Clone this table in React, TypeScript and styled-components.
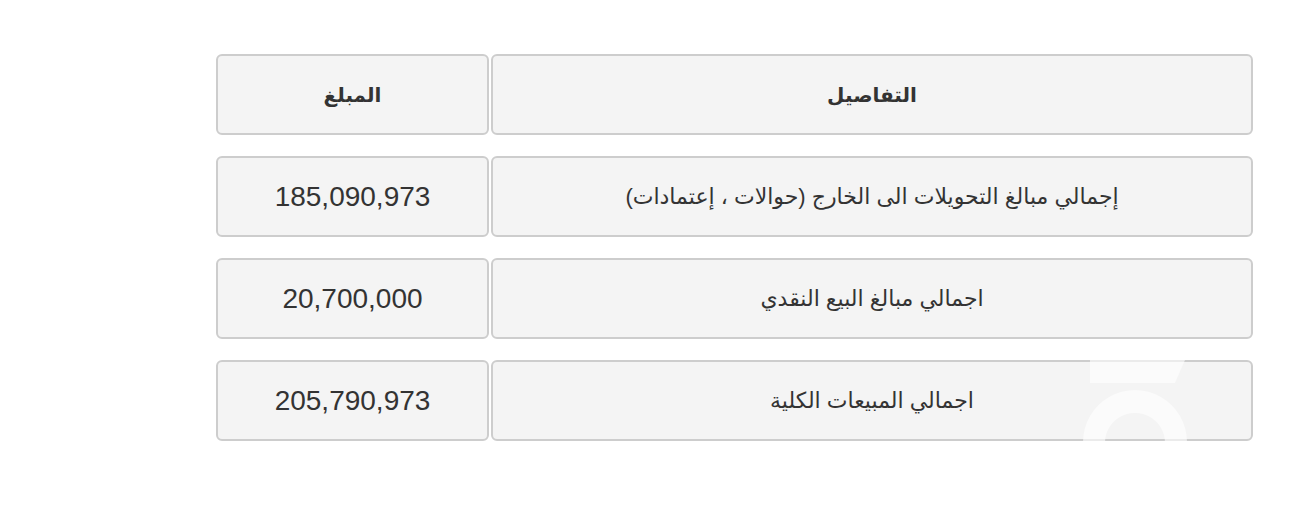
import React from "react";
import styled, { createGlobalStyle } from "styled-components";

const GlobalStyle = createGlobalStyle`
	html, body {
		margin: 0;
		padding: 0;
		background: #fff;
		font-family: "Liberation Sans", Arial, "DejaVu Sans", sans-serif;
		color: #333;
	}
`;

const Page = styled.div`
	position: relative;
	width: 1308px;
	height: 510px;
	overflow: hidden;
	direction: rtl;
	box-sizing: border-box;
	padding: 33px 53px 0 0;
`;

const Table = styled.table`
	border-collapse: separate;
	border-spacing: 2px 21px;
	table-layout: fixed;
	width: 1041px;
`;

const Cell = styled.td<{ $head?: boolean; $wide?: boolean }>`
	height: 81px;
	box-sizing: border-box;
	border: 2px solid #cdcdcd;
	border-radius: 6px;
	background: #f4f4f4;
	text-align: center;
	vertical-align: middle;
	padding: 0 10px;
	width: ${(p) => (p.$wide ? "762px" : "273px")};
	font-size: ${(p) => (p.$head ? "20px" : "22px")};
	font-weight: ${(p) => (p.$head ? "bold" : "normal")};
	color: #333;
`;

const Amount = styled.span`
	font-size: 28px;
	direction: ltr;
	unicode-bidi: isolate;
`;

const Watermark = styled.svg`
	position: absolute;
	left: 1080px;
	top: 355px;
	pointer-events: none;
`;

const rows = [
	{ details: "إجمالي مبالغ التحويلات الى الخارج (حوالات ، إعتمادات)", amount: "185,090,973" },
	{ details: "اجمالي مبالغ البيع النقدي", amount: "20,700,000" },
	{ details: "اجمالي المبيعات الكلية", amount: "205,790,973" },
];

const App: React.FC = () => {
	return (
		<>
			<GlobalStyle />
			<Page>
				<Table>
					<tbody>
						<tr>
							<Cell $head $wide>التفاصيل</Cell>
							<Cell $head>المبلغ</Cell>
						</tr>
						{rows.map((r) => (
							<tr key={r.amount}>
								<Cell $wide>{r.details}</Cell>
								<Cell>
									<Amount>{r.amount}</Amount>
								</Cell>
							</tr>
						))}
					</tbody>
				</Table>
				<Watermark width="200" height="160" viewBox="0 0 200 160">
					<g fill="#ffffff" fillOpacity="0.6">
						<path d="M10 5 H105 L95 28 H10 Z" />
						<path
							fillRule="evenodd"
							d="M55 35 a52 52 0 1 0 0.01 0 Z M55 58 a30 30 0 1 1 -0.01 0 Z"
						/>
					</g>
				</Watermark>
			</Page>
		</>
	);
};

export default App;
